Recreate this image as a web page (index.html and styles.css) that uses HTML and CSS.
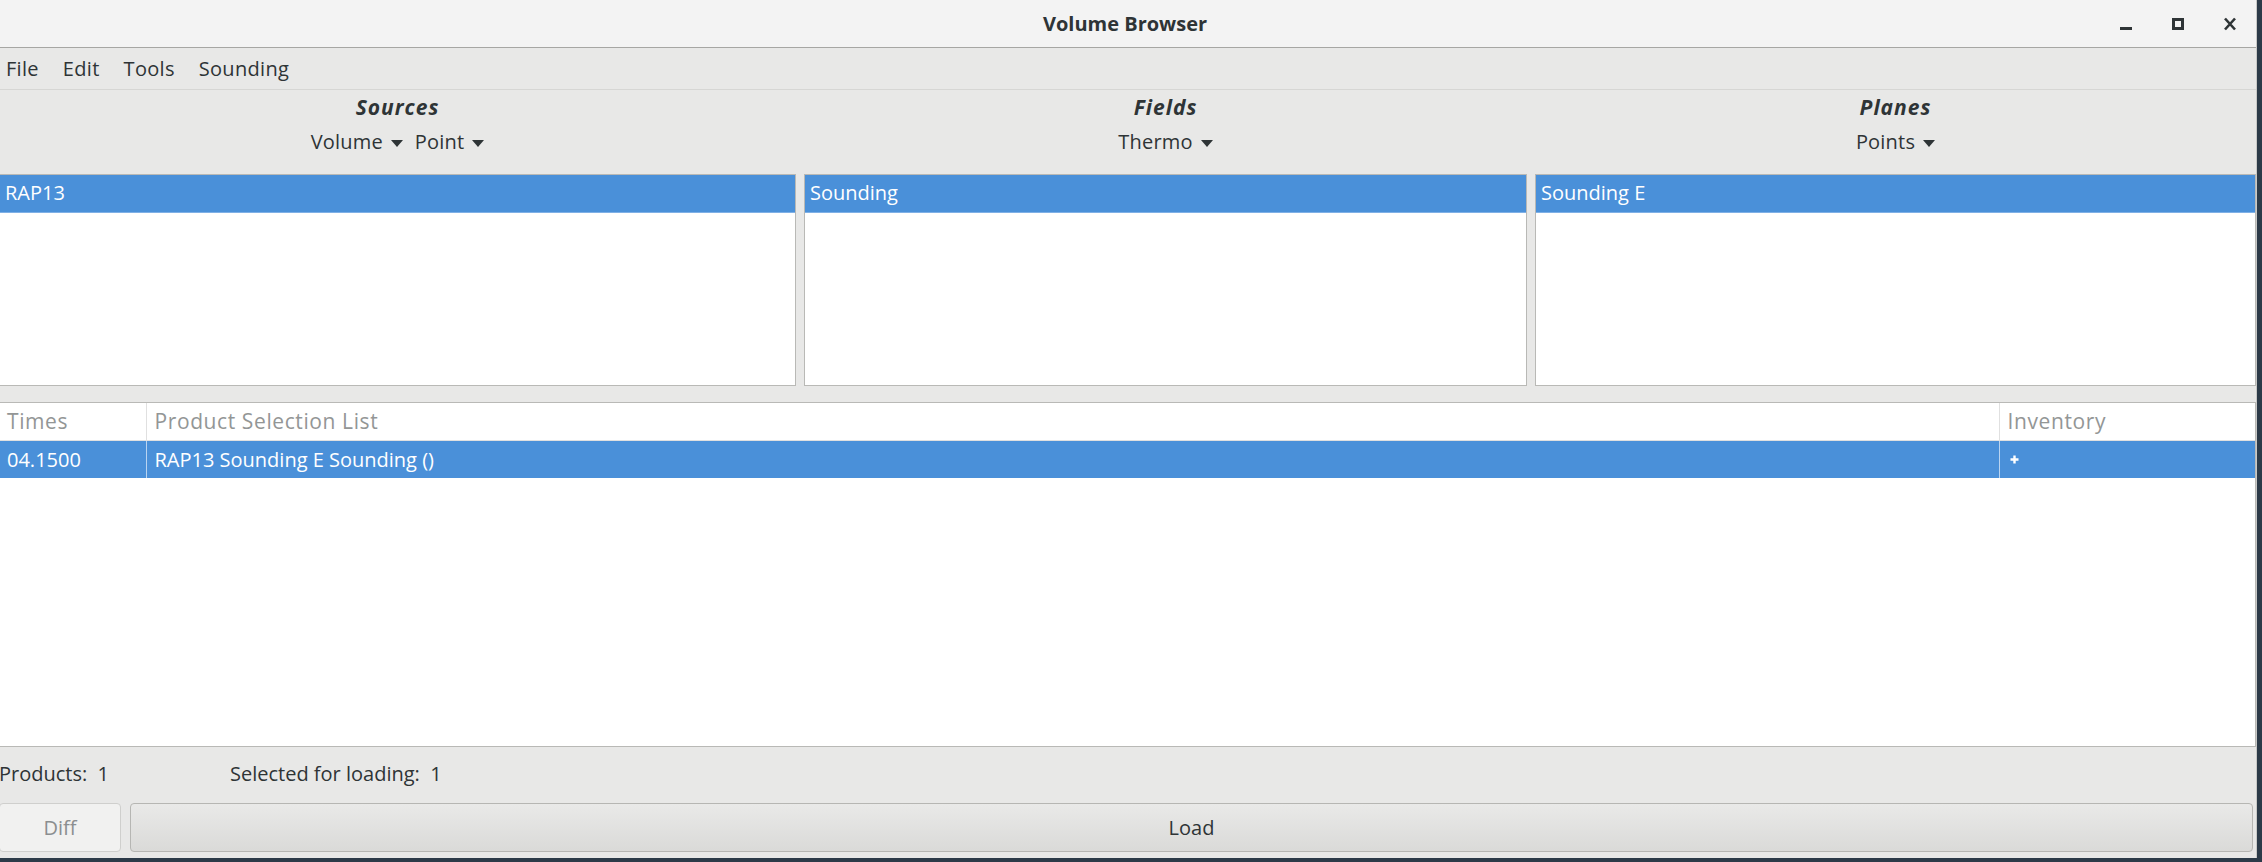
FILE: index.html
```html
<!DOCTYPE html>
<html lang="en">
<head>
  <meta charset="UTF-8">
  <meta name="viewport" content="width=device-width, initial-scale=1.0">
  <title>Volume Browser</title>
  <link rel="stylesheet" href="styles.css">
</head>
<body>
  <div class="window">
    <header class="titlebar">
      <div></div>
      <div class="title">Volume Browser</div>
      <div class="controls">
        <span class="ctl">
          <svg width="14" height="14" viewBox="0 0 14 14"><rect x="1" y="10" width="12" height="3" fill="#2e3436"/></svg>
        </span>
        <span class="ctl">
          <svg width="14" height="14" viewBox="0 0 14 14"><rect x="2.5" y="2.5" width="9" height="9" fill="none" stroke="#2e3436" stroke-width="3"/></svg>
        </span>
        <span class="ctl">
          <svg width="14" height="14" viewBox="0 0 14 14"><path d="M2 1.5 L12 12.5 M12 1.5 L2 12.5" stroke="#2e3436" stroke-width="2.6"/></svg>
        </span>
      </div>
    </header>

    <nav class="menubar">
      <span>File</span>
      <span>Edit</span>
      <span>Tools</span>
      <span>Sounding</span>
    </nav>

    <div class="content">
      <div class="selectors">
        <section class="col">
          <h3>Sources</h3>
          <div class="menus"><span class="drop">Volume</span><span class="drop">Point</span></div>
          <ul class="list"><li class="selected">RAP13</li></ul>
        </section>
        <section class="col">
          <h3>Fields</h3>
          <div class="menus"><span class="drop">Thermo</span></div>
          <ul class="list"><li class="selected">Sounding</li></ul>
        </section>
        <section class="col">
          <h3>Planes</h3>
          <div class="menus"><span class="drop">Points</span></div>
          <ul class="list"><li class="selected">Sounding E</li></ul>
        </section>
      </div>

      <div class="products">
        <table>
          <thead>
            <tr>
              <th class="c-time">Times</th>
              <th class="c-prod">Product Selection List</th>
              <th class="c-inv">Inventory</th>
            </tr>
          </thead>
          <tbody>
            <tr class="selected">
              <td>04.1500</td>
              <td>RAP13 Sounding E Sounding ()</td>
              <td><svg class="plus" width="9" height="9" viewBox="0 0 9 9"><path d="M4.5 0.5 V8.5 M0.5 4.5 H8.5" stroke="#fff" stroke-width="2.4"/></svg></td>
            </tr>
          </tbody>
        </table>
      </div>

      <div class="status">
        <span class="count">Products:&nbsp; 1</span>
        <span class="count">Selected for loading:&nbsp; 1</span>
      </div>

      <div class="buttons">
        <button class="btn diff" disabled>Diff</button>
        <button class="btn load">Load</button>
      </div>
    </div>
  </div>
</body>
</html>
```

FILE: styles.css
```css
* { margin: 0; padding: 0; box-sizing: border-box; }
body {
  font-family: 'Open Sans', sans-serif;
  font-size: 20px;
  color: #2e3436;
  background-color: #2c3a48;
  overflow: hidden;
}

.window {
  margin-left: -6px;
  width: 2263px;
  height: 858px;
  background-color: #e8e8e7;
  border-right: 1px solid #c9c9c7;
  display: flex;
  flex-direction: column;
}

/* title bar */
.titlebar {
  height: 48px;
  background-color: #f3f3f3;
  border-bottom: 1px solid #a6a6a3;
  display: grid;
  grid-template-columns: 1fr auto 1fr;
  align-items: center;
}
.title { font-weight: bold; font-size: 20px; }
.controls {
  display: flex;
  justify-content: flex-end;
  gap: 38px;
  padding-right: 19px;
  padding-top: 1px;
}
.ctl { width: 14px; height: 14px; display: block; }
.ctl svg { display: block; }

/* menu bar */
.menubar {
  height: 42px;
  line-height: 41px;
  border-bottom: 1px solid #d6d6d4;
  display: flex;
}
.menubar span { padding: 0 12px; letter-spacing: 0.3px; }

.content { padding: 0 0 6px 5px; display: flex; flex-direction: column; flex: 1; }

/* source / field / plane selectors */
.selectors {
  display: grid;
  grid-template-columns: 797px 723px 1fr;
  column-gap: 8px;
}
.col h3 {
  height: 34px;
  line-height: 34px;
  text-align: center;
  font-size: 21px;
  letter-spacing: 1px;
  font-weight: bold;
  font-style: italic;
}
.menus {
  height: 36px;
  line-height: 36px;
  text-align: center;
  margin-bottom: 14px;
}
.drop { margin: 0 6px; letter-spacing: 0.2px; }
.drop::after {
  content: '';
  display: inline-block;
  margin-left: 8px;
  vertical-align: middle;
  border-left: 6px solid transparent;
  border-right: 6px solid transparent;
  border-top: 7px solid #2e3436;
}
.list {
  list-style: none;
  height: 212px;
  background: #ffffff;
  border: 1px solid #b9b9b6;
}
.list li { height: 38px; line-height: 36px; padding-left: 5px; }
.list li.selected {
  background-color: #4a90d9;
  color: #ffffff;
  border-bottom: 1px solid #7fb0e6;
}

/* product table */
.products {
  margin-top: 16px;
  height: 345px;
  background: #ffffff;
  border: 1px solid #b9b9b6;
}
.products table { width: 100%; border-collapse: collapse; }
.products th {
  font-weight: normal;
  font-size: 21px;
  letter-spacing: 0.6px;
  text-align: left;
  color: #939696;
  height: 37px;
  padding-left: 8px;
  border-bottom: 1px solid #e0e0e0;
  border-left: 1px solid #e0e0e0;
}
.products th:first-child, .products td:first-child { border-left: none; padding-left: 7px; }
.products td {
  height: 38px;
  padding-left: 8px;
  border-left: 1px solid #b9d4f1;
}
.products tr.selected td { background-color: #4a90d9; color: #ffffff; }
.c-time { width: 146px; }
.c-inv { width: 256px; }
.plus { display: block; margin-left: 2px; }

/* status and buttons */
.status {
  height: 53px;
  line-height: 53px;
  display: flex;
}
.status .count:first-child { width: 231px; }
.buttons {
  margin-top: 3px;
  height: 49px;
  display: flex;
  gap: 9px;
  padding-right: 3px;
}
.btn {
  font-family: 'Open Sans', sans-serif;
  font-size: 20px;
  color: #2e3436;
  border: 1px solid #b6b6b3;
  border-radius: 4px;
  background: linear-gradient(#e9e9e8, #dadad8);
}
.btn.diff {
  width: 122px;
  color: #8b8e8f;
  background: #f1f1f0;
  border-color: #cfcfcd;
}
.btn.load { flex: 1; }
```
